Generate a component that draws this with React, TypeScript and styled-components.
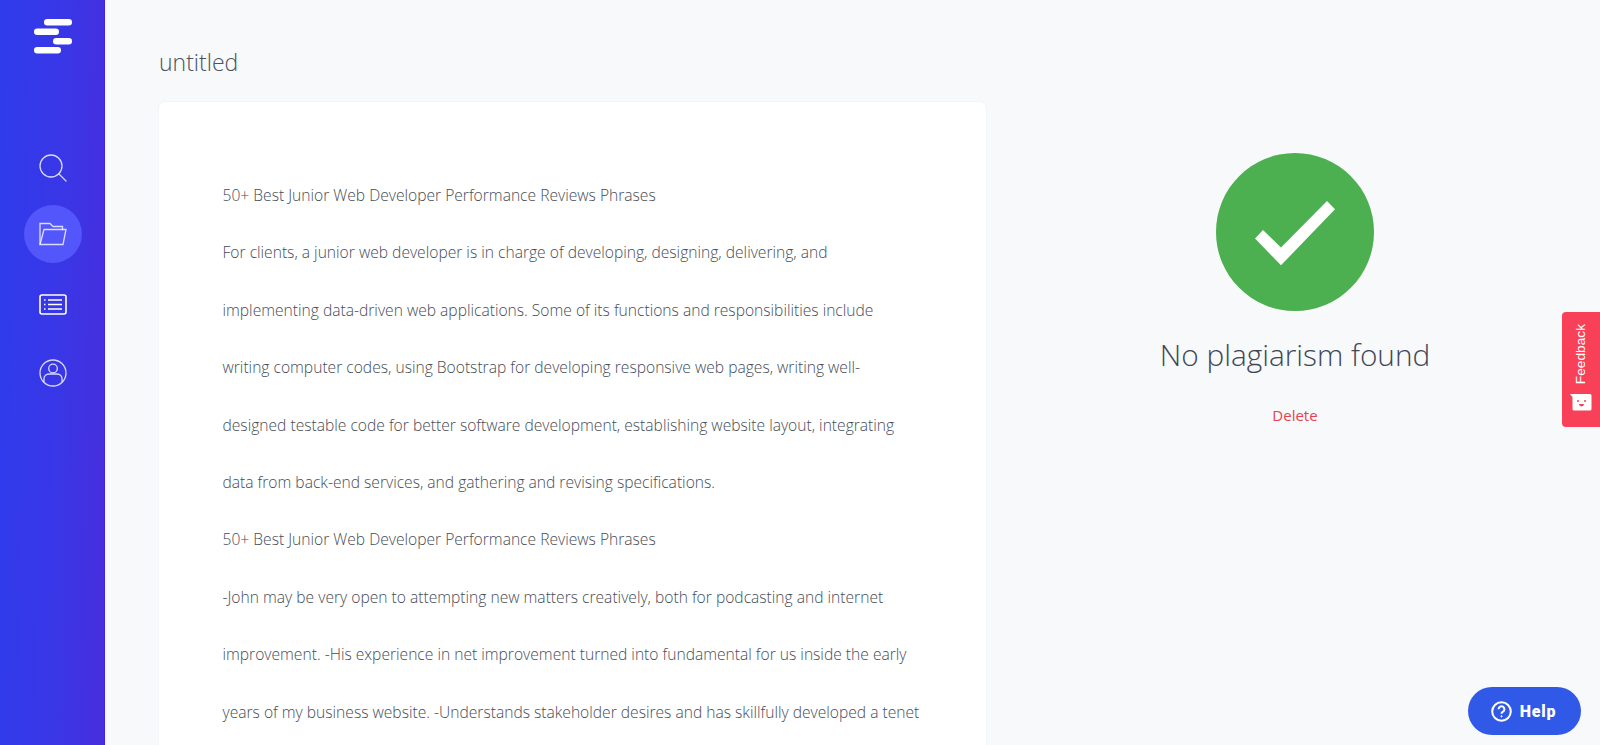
import React from 'react';
import styled, { createGlobalStyle } from 'styled-components';

const GlobalStyle = createGlobalStyle`
  html, body {
    margin: 0;
    height: 100%;
    overflow: hidden;
    background: #f8f9fb;
  }
  * {
    box-sizing: border-box;
  }
`;

const Page = styled.div`
  display: flex;
  width: 1600px;
  height: 745px;
  overflow: hidden;
  font-family: 'Open Sans', sans-serif;
  font-weight: 300;
  color: #3d4654;
`;

const Sidebar = styled.nav`
  flex: 0 0 105px;
  display: flex;
  flex-direction: column;
  align-items: center;
  background: linear-gradient(91deg, #2f3cec 0%, #3a36e6 60%, #482edc 100%);
  border-right: 1px solid #3a20f4;
  padding: 19px 0 0 1px;
`;

const NavList = styled.div`
  display: flex;
  flex-direction: column;
  align-items: center;
  margin-top: 83px;
  gap: 10px;
`;

const NavItem = styled.a<{ $active?: boolean }>`
  width: 58px;
  height: 58px;
  margin-bottom: ${(p) => (p.$active ? '3px' : '0')};
  border-radius: 50%;
  display: flex;
  align-items: center;
  justify-content: center;
  background: ${(p) => (p.$active ? '#5356fb' : 'transparent')};
`;

const Main = styled.main`
  flex: 1;
  display: flex;
  padding: 0 0 0 54px;
`;

const Left = styled.section`
  flex: 0 0 827px;
  display: flex;
  flex-direction: column;
`;

const Title = styled.h1`
  margin: 0;
  padding-top: 46px;
  height: 102px;
  font-size: 23px;
  line-height: 32px;
  font-weight: 300;
  color: #4a5260;
`;

const Card = styled.article`
  flex: 1;
  background: #fff;
  border-radius: 6px 6px 0 0;
  box-shadow: 0 0 2px rgba(30, 40, 70, 0.07);
  padding: 66px 40px 0 63.5px;
`;

const Line = styled.p`
  margin: 0;
  height: 57.4px;
  font-size: 15.62px;
  line-height: 54px;
  white-space: nowrap;
  color: #454c58;
`;

const Result = styled.aside`
  flex: 1;
  display: flex;
  flex-direction: column;
  align-items: center;
  padding-top: 153px;
  padding-left: 4px;
`;

const Badge = styled.div`
  width: 158px;
  height: 158px;
  padding-top: 3px;
  border-radius: 50%;
  background: #4caf50;
  display: flex;
  align-items: center;
  justify-content: center;
`;

const ResultText = styled.h2`
  margin: 22px 0 0;
  font-size: 29.8px;
  line-height: 44px;
  font-weight: 300;
  color: #3f4756;
`;

const DeleteLink = styled.a`
  margin-top: 28px;
  font-size: 15px;
  line-height: 20px;
  font-weight: 400;
  color: #e8404f;
`;

const FeedbackTab = styled.div`
  position: fixed;
  right: 0;
  top: 312px;
  width: 38px;
  height: 115px;
  border-radius: 4px 0 0 4px;
  background: #f84159;
  color: #fff;
  display: flex;
  flex-direction: column;
  align-items: center;
  justify-content: flex-end;
  gap: 10px;
  padding-bottom: 16px;
`;

const FeedbackLabel = styled.span`
  writing-mode: vertical-rl;
  transform: rotate(180deg);
  font-family: 'Liberation Sans', sans-serif;
  font-weight: 400;
  font-size: 13.7px;
  line-height: 14px;
`;

const HelpButton = styled.button`
  position: fixed;
  right: 19px;
  top: 687px;
  width: 113px;
  height: 48px;
  border: none;
  border-radius: 24px;
  background: #3059e8;
  color: #fff;
  display: flex;
  align-items: center;
  justify-content: center;
  gap: 8px;
  padding: 0 2px 0 0;
  font-family: Roboto, sans-serif;
  font-weight: 900;
  font-size: 16px;
  letter-spacing: 0.8px;
`;

const lines = [
  '50+ Best Junior Web Developer Performance Reviews Phrases',
  'For clients, a junior web developer is in charge of developing, designing, delivering, and',
  'implementing data-driven web applications. Some of its functions and responsibilities include',
  'writing computer codes, using Bootstrap for developing responsive web pages, writing well-',
  'designed testable code for better software development, establishing website layout, integrating',
  'data from back-end services, and gathering and revising specifications.',
  '50+ Best Junior Web Developer Performance Reviews Phrases',
  '-John may be very open to attempting new matters creatively, both for podcasting and internet',
  'improvement. -His experience in net improvement turned into fundamental for us inside the early',
  'years of my business website. -Understands stakeholder desires and has skillfully developed a tenet',
];

const Logo = () => (
  <svg width="38" height="35" viewBox="0 0 38 35" fill="#fff">
    <rect x="10" y="0" width="28" height="6.5" rx="3.2" />
    <rect x="0" y="9.5" width="25" height="6.5" rx="3.2" />
    <rect x="19" y="19" width="19" height="6.5" rx="3.2" />
    <rect x="0" y="28" width="27" height="6.5" rx="3.2" />
  </svg>
);

const stroke = { fill: 'none', stroke: '#fff', strokeOpacity: 0.8, strokeWidth: 1.3 };

const SearchIcon = () => (
  <svg width="28" height="31" viewBox="0 -3 28 31" {...stroke}>
    <circle cx="12" cy="12" r="11" />
    <path d="M20 20 L27 27" strokeLinecap="round" />
  </svg>
);

const FolderIcon = () => (
  <svg width="28" height="24" viewBox="0 0 28 24" {...stroke}>
    <path d="M1 22.5 V1.5 H11 L14 4.5 H23.5 V7.5" />
    <path d="M1 22.5 H24 L27 7.5 H5 Z" />
  </svg>
);

const ListIcon = () => (
  <svg width="28" height="22" viewBox="0 0 28 22" fill="none" stroke="#fff">
    <rect x="1" y="1" width="26" height="19" rx="2" strokeWidth="1.6" />
    <path d="M9 6 H23 M9 10.5 H23 M9 15 H23" strokeWidth="1.4" />
    <path d="M5 6 H6.5 M5 10.5 H6.5 M5 15 H6.5" strokeWidth="1.4" />
  </svg>
);

const UserIcon = () => (
  <svg width="28" height="28" viewBox="0 0 28 28" {...stroke}>
    <circle cx="14" cy="14" r="13" />
    <circle cx="14" cy="9.5" r="4.3" />
    <path d="M5 23 V19.5 C5 16.5 8 15 10.5 15 H17.5 C20 15 23 16.5 23 19.5 V23" />
  </svg>
);

const CheckIcon = () => (
  <svg width="80" height="65" viewBox="0 0 80 65" fill="#fff">
    <polygon points="0,37.6 8,29 26,46.6 72,0 80,8.3 26,64.3" />
  </svg>
);

const SmileIcon = () => (
  <svg width="22" height="17" viewBox="0 0 22 17">
    <path d="M0 0 H20 a1.5 1.5 0 0 1 1.5 1.5 V15 a1.5 1.5 0 0 1 -1.5 1.5 H4 a1.5 1.5 0 0 1 -1.5 -1.5 V3 Z" fill="#fff" />
    <circle cx="8" cy="7" r="1" fill="#f84159" />
    <circle cx="15" cy="7" r="1" fill="#f84159" />
    <path d="M9 10 H14 A2.5 2.5 0 0 1 9 10 Z" fill="#f84159" />
  </svg>
);

const HelpIcon = () => (
  <svg width="21" height="21" viewBox="0 0 21 21" fill="none" stroke="#fff" strokeWidth="2">
    <circle cx="10.5" cy="10.5" r="9.3" />
    <path d="M7.6 8.2 a2.9 2.9 0 1 1 4.4 2.5 c-1 .6 -1.5 1 -1.5 2" />
    <circle cx="10.5" cy="15.3" r="0.6" fill="#fff" strokeWidth="1" />
  </svg>
);

export default function App() {
  return (
    <Page>
      <GlobalStyle />
      <Sidebar>
        <Logo />
        <NavList>
          <NavItem><SearchIcon /></NavItem>
          <NavItem $active><FolderIcon /></NavItem>
          <NavItem><ListIcon /></NavItem>
          <NavItem><UserIcon /></NavItem>
        </NavList>
      </Sidebar>
      <Main>
        <Left>
          <Title>untitled</Title>
          <Card>
            {lines.map((text, i) => (
              <Line key={i}>{text}</Line>
            ))}
          </Card>
        </Left>
        <Result>
          <Badge><CheckIcon /></Badge>
          <ResultText>No plagiarism found</ResultText>
          <DeleteLink>Delete</DeleteLink>
        </Result>
      </Main>
      <FeedbackTab>
        <FeedbackLabel>Feedback</FeedbackLabel>
        <SmileIcon />
      </FeedbackTab>
      <HelpButton>
        <HelpIcon />
        Help
      </HelpButton>
    </Page>
  );
}
